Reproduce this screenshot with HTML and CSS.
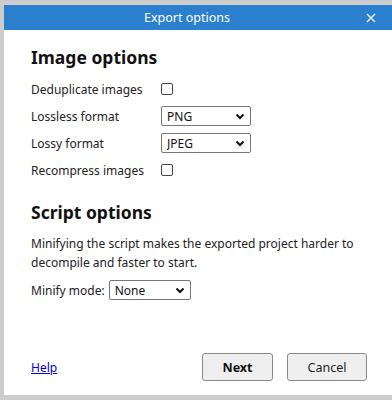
FILE: index.html
```html
<!DOCTYPE html>
<html lang="en">

<head>
  <meta charset="UTF-8">
  <meta name="viewport" content="width=device-width, initial-scale=1.0">
  <title>Export options</title>
  <link rel="stylesheet" href="styles.css">
</head>

<body>
  <div class="dialog">
    <div class="titlebar">
      <span class="title">Export options</span>
      <span class="close">
        <svg width="10" height="10" viewBox="0 0 10 10">
          <path d="M1 1 L9 9 M9 1 L1 9" stroke="#fff" stroke-width="1.3" fill="none" />
        </svg>
      </span>
    </div>
    <div class="content">
      <h2>Image options</h2>
      <div class="form-grid">
        <label>Deduplicate images</label>
        <div><input type="checkbox" class="check"></div>
        <label>Lossless format</label>
        <div>
          <select class="sel wide">
            <option>PNG</option>
          </select>
        </div>
        <label>Lossy format</label>
        <div>
          <select class="sel wide">
            <option>JPEG</option>
          </select>
        </div>
        <label>Recompress images</label>
        <div><input type="checkbox" class="check"></div>
      </div>

      <h2 class="second">Script options</h2>
      <p class="desc">Minifying the script makes the exported project harder to decompile and faster to start.</p>
      <div class="minify">
        <label>Minify mode:</label>
        <select class="sel narrow">
          <option>None</option>
        </select>
      </div>
    </div>
    <div class="footer">
      <a href="#" class="help">Help</a>
      <div class="buttons">
        <button class="btn next">Next</button>
        <button class="btn cancel">Cancel</button>
      </div>
    </div>
  </div>
</body>

</html>
```

FILE: styles.css
```css
* {
  margin: 0;
  padding: 0;
  box-sizing: border-box;
  font-family: 'Noto Sans', 'Open Sans', sans-serif;
}

body {
  background: #cdcdcd;
  width: 392px;
  height: 400px;
  overflow: hidden;
}

.dialog {
  margin: 5px 0 0 4px;
  height: 390px;
  background: #fff;
  display: flex;
  flex-direction: column;
}

.titlebar {
  height: 25px;
  background: #2b7fcf;
  color: #fff;
  display: flex;
  align-items: center;
  justify-content: center;
  position: relative;
  font-size: 12.5px;
  padding-right: 22px;
}

.close {
  position: absolute;
  right: 16px;
  top: 8px;
  width: 10px;
  height: 10px;
  display: flex;
}

.content {
  flex: 1;
  padding: 15px 24px 0 27px;
  color: #222;
  font-size: 12px;
}

h2 {
  font-size: 17.5px;
  font-weight: 700;
  color: #111;
  line-height: 24px;
  margin-bottom: 10px;
}

h2.second {
  margin-top: 20px;
  margin-bottom: 10px;
}

.form-grid {
  display: grid;
  grid-template-columns: 130px auto;
  row-gap: 7px;
  align-items: center;
}

.form-grid > div {
  height: 20px;
  display: flex;
  align-items: center;
}

.check {
  appearance: none;
  width: 12px;
  height: 12px;
  border: 1px solid #444;
  border-radius: 2px;
  background: #fff;
}

.sel {
  appearance: none;
  height: 20px;
  border: 1px solid #767676;
  border-radius: 2px;
  background: #fff;
  font-size: 12px;
  color: #111;
  padding: 0 0 0 5px;
  background-image: url("data:image/svg+xml,%3Csvg xmlns='http://www.w3.org/2000/svg' width='10' height='7' viewBox='0 0 10 7'%3E%3Cpolyline points='1.5 1.5 5 5 8.5 1.5' fill='none' stroke='%23111' stroke-width='2'/%3E%3C/svg%3E");
  background-repeat: no-repeat;
  background-position: right 5px center;
}

.sel.wide {
  width: 90px;
}

.sel.narrow {
  width: 82px;
}

.desc {
  line-height: 19px;
  margin-top: 1px;
  margin-bottom: 8px;
}

.minify {
  display: flex;
  align-items: center;
  gap: 4px;
}

.footer {
  display: flex;
  align-items: center;
  justify-content: space-between;
  padding: 0 25px 14px 27px;
  font-size: 12px;
}

.help {
  color: #0000ee;
  text-decoration: underline;
}

.buttons {
  display: flex;
  gap: 14px;
}

.btn {
  height: 28px;
  border: 1px solid #8a8a8a;
  border-radius: 3px;
  background: #efefef;
  font-size: 12.5px;
  color: #222;
}

.btn.next {
  width: 71px;
  font-weight: 700;
  color: #111;
}

.btn.cancel {
  width: 80px;
}
```
